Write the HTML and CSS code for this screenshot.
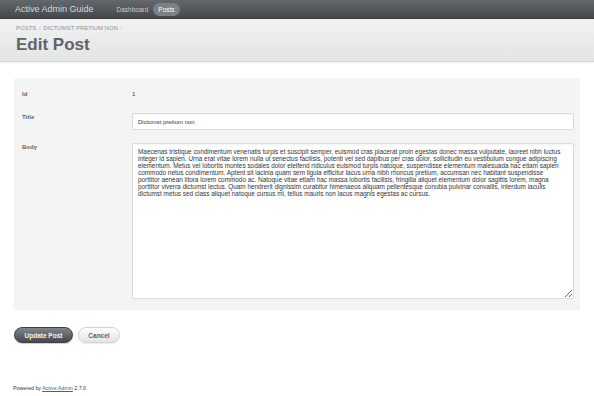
FILE: index.html
```html
<!DOCTYPE html>
<html lang="en">
<head>
  <meta charset="UTF-8" />
  <title>Edit Post | Active Admin Guide</title>
  <link rel="stylesheet" href="styles.css">
</head>
<body>
  <div class="header">
    <span class="brand">Active Admin Guide</span>
    <a class="nav-item" href="#">Dashboard</a>
    <a class="nav-item current" href="#">Posts</a>
  </div>

  <div class="title-bar">
    <div class="breadcrumb">Posts <span class="sep">/</span> Dictumst pretium non <span class="sep">/</span></div>
    <h2 class="page-title">Edit Post</h2>
  </div>

  <form class="main">
    <fieldset class="inputs">
      <div class="row">
        <label>Id</label>
        <span class="value">1</span>
      </div>
      <div class="row">
        <label for="post_title">Title</label>
        <input id="post_title" type="text" value="Dictumst pretium non">
      </div>
      <div class="row">
        <label for="post_body">Body</label>
        <textarea id="post_body">Maecenas tristique condimentum venenatis turpis et suscipit semper, euismod cras placerat proin egestas donec massa vulputate, laoreet nibh luctus integer id sapien. Urna erat vitae lorem nulla ut senectus facilisis, potenti vel sed dapibus per cras dolor, sollicitudin eu vestibulum congue adipiscing elementum. Metus vel lobortis montes sodales dolor eleifend ridiculus euismod turpis natoque, suspendisse elementum malesuada hac etiam sapien commodo netus condimentum. Aptent sit lacinia quam sem ligula efficitur lacus urna nibh rhoncus pretium, accumsan nec habitant suspendisse porttitor aenean litora lorem commodo ac. Natoque vitae etiam hac massa lobortis facilisis, fringilla aliquet elementum dolor sagittis lorem, magna porttitor viverra dictumst lectus. Quam hendrerit dignissim curabitur himenaeos aliquam pellentesque conubia pulvinar convallis, interdum iaculis dictumst metus sed class aliquet natoque cursus mi, tellus mauris non lacus magnis egestas ac cursus.</textarea>
      </div>
    </fieldset>

    <div class="actions">
      <button type="button" class="btn primary">Update Post</button>
      <button type="button" class="btn cancel">Cancel</button>
    </div>
  </form>

  <div class="footer">Powered by <a href="#">Active Admin</a> 2.7.0</div>
</body>
</html>
```

FILE: styles.css
```css
body {
  font-family: "Liberation Sans", Arial, sans-serif;
  background: #fff;
  color: #323537;
  margin: 0;
  padding: 0;
}
.header {
  display: flex;
  align-items: center;
  height: 19px;
  padding: 0 15px;
  background: linear-gradient(#63686d, #45494d);
  border-bottom: 1px solid #3a3d40;
  box-sizing: border-box;
}
.brand {
  font-size: 9px;
  color: #d6d8da;
  margin-right: 18px;
}
.nav-item {
  font-size: 6.5px;
  color: #c9cccf;
  text-decoration: none;
  padding: 3px 5px;
  border-radius: 8px;
  line-height: 7px;
}
.nav-item.current {
  background: #7b8186;
  color: #fff;
}
.title-bar {
  height: 43px;
  box-sizing: border-box;
  padding: 6px 16px 0;
  background: linear-gradient(#f2f2f2, #e3e4e5);
  border-bottom: 1px solid #d5d6d7;
  box-shadow: 0 1px 2px rgba(0,0,0,0.06);
}
.breadcrumb {
  font-size: 6px;
  text-transform: uppercase;
  color: #8a949e;
  line-height: 7px;
}
.breadcrumb .sep { color: #b5bbc0; margin: 0 1px; }
.page-title {
  margin: 2px 0 0;
  font-size: 17px;
  line-height: 22px;
  font-weight: bold;
  color: #5e6469;
}
.main {
  padding: 16px 14px 0;
}
.inputs {
  margin: 0;
  border: 0;
  background: #f4f4f4;
  padding: 10px 6px 11px 7px;
  box-shadow: inset 0 1px 0 #f9f9f9;
}
.row {
  display: flex;
  align-items: flex-start;
  margin-bottom: 13px;
}
.row:last-child { margin-bottom: 0; }
.row label {
  width: 110px;
  flex: none;
  font-size: 6px;
  font-weight: bold;
  color: #5e6469;
  line-height: 8px;
  padding-left: 1px;
}
.row .value {
  font-size: 6px;
  line-height: 12px;
  color: #323537;
}
.row:first-child label { line-height: 12px; }
.row input,
.row textarea {
  flex: 1;
  font-family: "Liberation Sans", Arial, sans-serif;
  font-size: 6px;
  color: #323537;
  background: #fff;
  border: 1px solid #dcdcdc;
  border-radius: 1px;
  box-shadow: inset 0 1px 1px rgba(0,0,0,0.04);
  box-sizing: border-box;
  margin: 0;
  outline: none;
}
.row input {
  height: 17px;
  padding: 0 5px;
}
.row textarea {
  height: 156px;
  padding: 4px 8px 4px 5px;
  font-size: 6.4px;
  line-height: 7px;
}
.actions {
  display: flex;
  gap: 5px;
  margin-top: 17px;
}
.btn {
  height: 16px;
  border-radius: 8px;
  font-family: "Liberation Sans", Arial, sans-serif;
  font-size: 6.5px;
  font-weight: bold;
  padding: 0;
  cursor: pointer;
}
.btn.primary {
  width: 59px;
  color: #f4f4f4;
  background: linear-gradient(#7f868b, #45494d);
  border: 1px solid #3f4347;
  box-shadow: 0 1px 1px rgba(0,0,0,0.2);
}
.btn.cancel {
  width: 42px;
  color: #5e6469;
  background: linear-gradient(#fff, #e4e4e4);
  border: 1px solid #d3d3d3;
  box-shadow: 0 1px 1px rgba(0,0,0,0.08);
}
.footer {
  margin: 42px 13px 0;
  font-size: 5.3px;
  color: #323537;
  line-height: 7px;
}
.footer a { color: #38678b; }
```
